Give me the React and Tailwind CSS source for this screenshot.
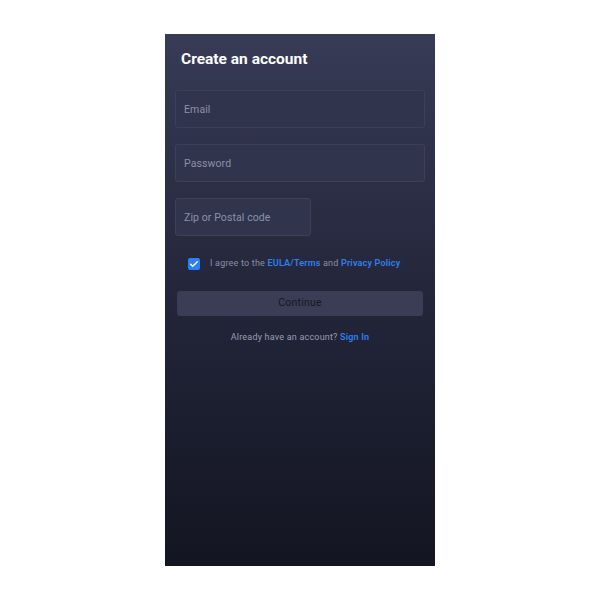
import React from "react";

const Field = ({ placeholder, type = "text", className = "" }) => (
  <input
    type={type}
    placeholder={placeholder}
    className={`h-[38px] rounded-[3px] border border-[#3c4059] bg-[#30344d] px-[8px] text-[10.5px] tracking-[0.1px] text-white placeholder-[#8d91aa] outline-none ${className}`}
  />
);

export default function App() {
  return (
    <div className="flex min-h-[600px] w-full justify-center bg-white pt-[34px] font-['Roboto',sans-serif]">
      <div className="flex h-[532px] w-[270px] flex-col bg-gradient-to-b from-[#373b56] via-[#23263a] to-[#131522] px-[10px]">
        <h1 className="mt-[15px] pl-[6px] text-[15.5px] font-bold leading-[20px] text-white">
          Create an account
        </h1>
        <div className="mt-[21px] flex flex-col gap-[16px]">
          <Field placeholder="Email" type="email" className="w-full" />
          <Field placeholder="Password" type="password" className="w-full" />
          <Field placeholder="Zip or Postal code" className="w-[136px]" />
        </div>
        <label className="mt-[21px] flex items-center pl-[13px]">
          <span className="flex h-[12px] w-[12px] items-center justify-center rounded-[2px] bg-[#2d7ff9]">
            <svg className="h-[10px] w-[10px]" viewBox="0 0 24 24" fill="none" stroke="white" strokeWidth="3.5" strokeLinecap="round" strokeLinejoin="round">
              <path d="M4 12.5l5 5L20 6.5" />
            </svg>
          </span>
          <span className="ml-[10px] text-[9px] tracking-[0.2px] text-[#8a8ea6]">
            I agree to the{" "}
            <span className="font-semibold text-[#2f80ed]">EULA/Terms</span> and{" "}
            <span className="font-semibold text-[#2f80ed]">Privacy Policy</span>
          </span>
        </label>
        <button className="mx-[2px] mt-[20px] h-[25px] rounded-[3px] bg-[#3a3d56] text-[10.5px] tracking-[0.2px] text-[#161822]">
          Continue
        </button>
        <p className="mt-[15px] text-center text-[9px] tracking-[0.2px] text-[#9a9db3]">
          Already have an account?{" "}
          <span className="font-semibold text-[#2f80ed]">Sign In</span>
        </p>
      </div>
    </div>
  );
}
